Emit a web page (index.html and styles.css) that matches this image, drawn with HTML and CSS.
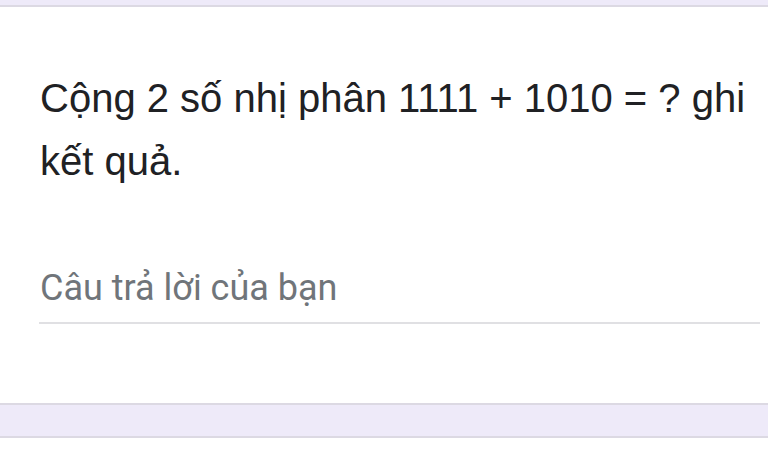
FILE: index.html
```html
<!DOCTYPE html>
<html lang="vi">
<head>
<meta charset="utf-8">
<link rel="stylesheet" href="styles.css">
</head>
<body>
<div class="band-top"></div>
<div class="card">
  <div class="question">Cộng 2 số nhị phân 1111 + 1010 = ? ghi kết quả.</div>
  <div class="answer">
    <div class="placeholder">Câu trả lời của bạn</div>
    <div class="underline"></div>
  </div>
</div>
<div class="band-gap"></div>
<div class="card-next"></div>
</body>
</html>
```
FILE: styles.css
```css
html, body {
  margin: 0;
  padding: 0;
  background: #ffffff;
}
body {
  width: 768px;
  height: 451px;
  overflow: hidden;
}
.band-top {
  height: 5px;
  background: #eeeaf9;
  border-bottom: 2px solid #dcd9e3;
}
.card {
  box-sizing: border-box;
  background: #ffffff;
  padding: 60px 8px 0 39px;
  border-bottom: 2px solid #dcd9e3;
  display: flex;
  flex-direction: column;
  height: 398px;
}
.question {
  font-family: "Liberation Sans", Arial, sans-serif;
  font-size: 40px;
  line-height: 63px;
  color: #202124;
  padding-left: 1px;
  width: 721px;
}
.answer {
  margin-top: 75px;
}
.placeholder {
  font-family: Roboto, "Noto Sans", sans-serif;
  font-size: 36px;
  line-height: 41px;
  color: #70757a;
  padding-left: 1px;
}
.underline {
  margin-top: 13px;
  height: 2px;
  background: #e0e0e3;
  width: 721px;
}
.band-gap {
  height: 31px;
  background: #eeeaf9;
  border-bottom: 2px solid #dcd9e3;
}
.card-next {
  height: 20px;
  background: #ffffff;
}
```
